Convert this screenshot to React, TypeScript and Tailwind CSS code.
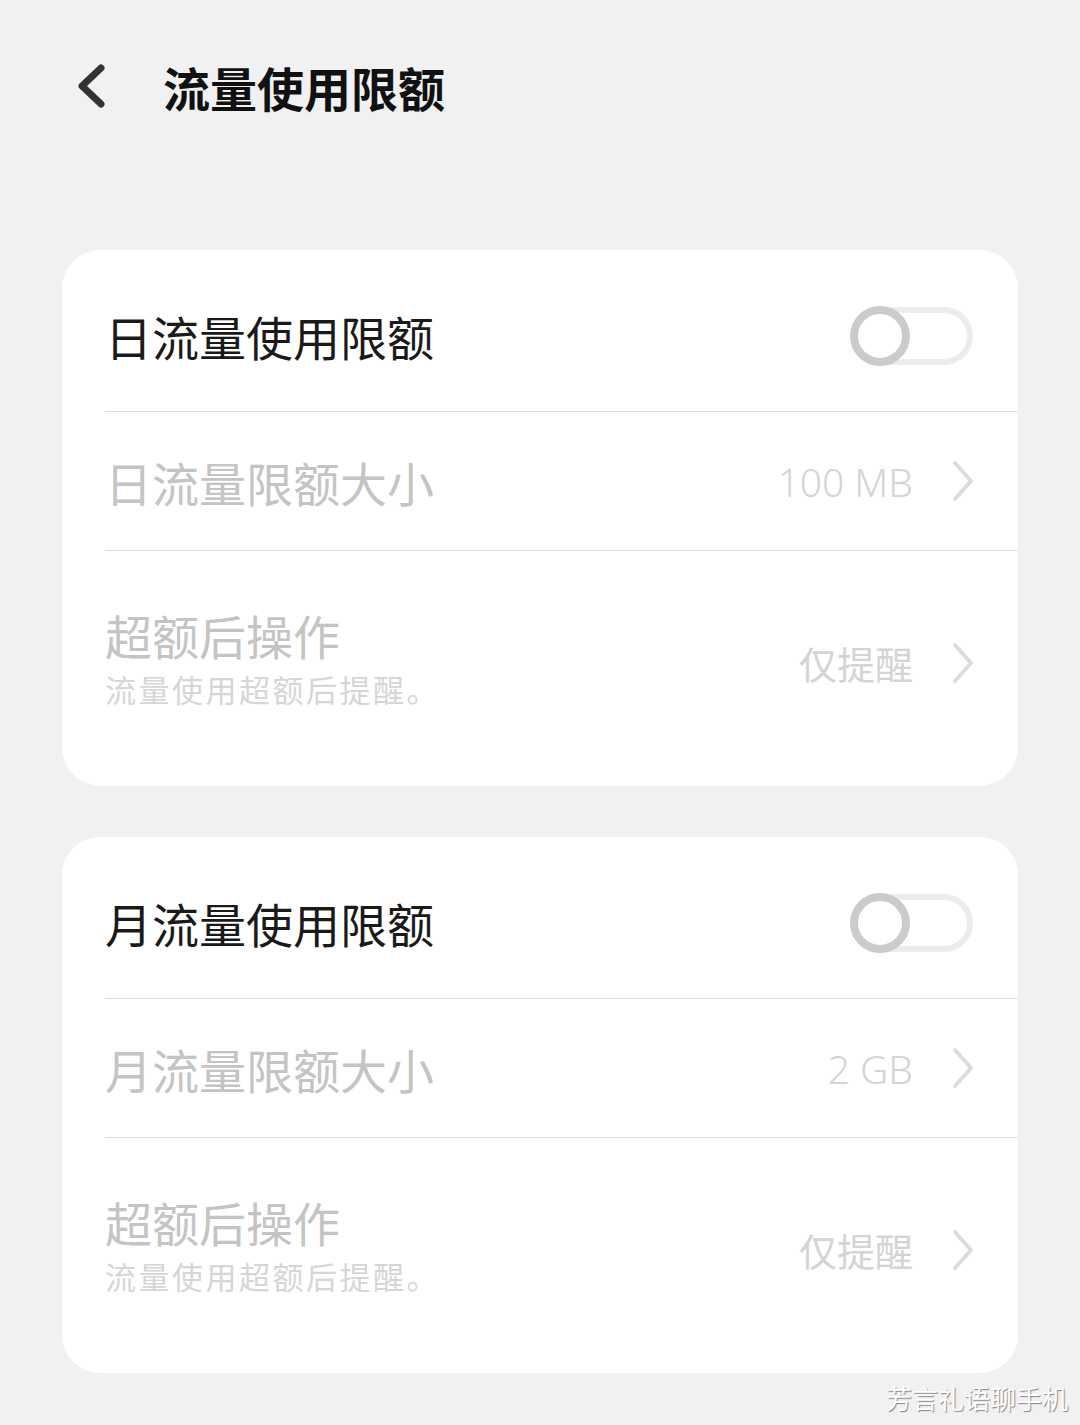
import React from "react";

const cjk = { fontFamily: '"Noto Sans CJK SC", "Noto Sans", sans-serif' };

function BackIcon() {
  return (
    <svg width="28" height="44" viewBox="0 0 28 44" className="block">
      <polyline
        points="24,4 5,22 24,40"
        fill="none"
        stroke="#333333"
        strokeWidth="7"
        strokeLinecap="round"
        strokeLinejoin="round"
      />
    </svg>
  );
}

function Chevron() {
  return (
    <svg width="24" height="42" viewBox="0 0 24 42" className="block">
      <polyline
        points="4,3 20,21 4,39"
        fill="none"
        stroke="#dcdcdc"
        strokeWidth="4"
        strokeLinecap="round"
        strokeLinejoin="round"
      />
    </svg>
  );
}

function Toggle() {
  return (
    <div className="relative h-[60px] w-[123px]">
      <div className="absolute inset-y-[1px] left-[4px] right-0 rounded-full border-[6px] border-[#ececec] bg-white" />
      <div className="absolute left-0 top-0 h-[60px] w-[60px] rounded-full border-[8px] border-[#cbcbcb] bg-white" />
    </div>
  );
}

function Divider() {
  return <div className="ml-[43px] h-px bg-[#dedede]" />;
}

interface LimitCardProps {
  title: string;
  sizeLabel: string;
  sizeValue: string;
}

function LimitCard({ title, sizeLabel, sizeValue }: LimitCardProps) {
  return (
    <section className="overflow-hidden rounded-[38px] bg-white">
      <div className="flex h-[161px] items-center justify-between pl-[43px] pr-[45px] pt-[10px]">
        <span className="text-[47px] leading-none text-[#1a1a1a]">{title}</span>
        <Toggle />
      </div>
      <Divider />
      <div className="flex h-[138px] items-center justify-between pl-[43px] pr-[43px]">
        <span className="text-[47px] leading-none text-[#c4c4c4]">{sizeLabel}</span>
        <div className="flex items-center gap-[38px]">
          <span
            className="text-[39px] font-light leading-none text-[#d4d4d4]"
            style={{ fontFamily: '"Noto Sans", "Noto Sans CJK SC", sans-serif' }}
          >
            {sizeValue}
          </span>
          <Chevron />
        </div>
      </div>
      <Divider />
      <div className="flex h-[235px] items-center justify-between pb-[22px] pl-[43px] pr-[43px]">
        <div className="flex flex-col">
          <span className="text-[47px] leading-[52px] text-[#c4c4c4]">超额后操作</span>
          <span className="mt-[10px] text-[31px] leading-[36px] tracking-[2.5px] text-[#d6d6d6]">
            流量使用超额后提醒。
          </span>
        </div>
        <div className="flex items-center gap-[38px] pt-[10px]">
          <span className="text-[38px] leading-none text-[#d4d4d4]">仅提醒</span>
          <Chevron />
        </div>
      </div>
    </section>
  );
}

export default function App() {
  return (
    <div className="relative min-h-[1425px] bg-[#f1f1f3] px-[62px]" style={cjk}>
      <header className="flex h-[176px] items-center pb-[4px]">
        <div className="ml-[15px]">
          <BackIcon />
        </div>
        <h1 className="ml-[58px] text-[47px] font-bold leading-none text-[#111111]">
          流量使用限额
        </h1>
      </header>
      <div className="mt-[74px] flex flex-col gap-[51px]">
        <LimitCard title="日流量使用限额" sizeLabel="日流量限额大小" sizeValue="100 MB" />
        <LimitCard title="月流量使用限额" sizeLabel="月流量限额大小" sizeValue="2 GB" />
      </div>
      <span
        className="absolute bottom-[14px] right-[12px] text-[26px] leading-none text-white"
        style={{ textShadow: "1px 1px 1px rgba(0,0,0,0.45)" }}
      >
        芳言礼语聊手机
      </span>
    </div>
  );
}
